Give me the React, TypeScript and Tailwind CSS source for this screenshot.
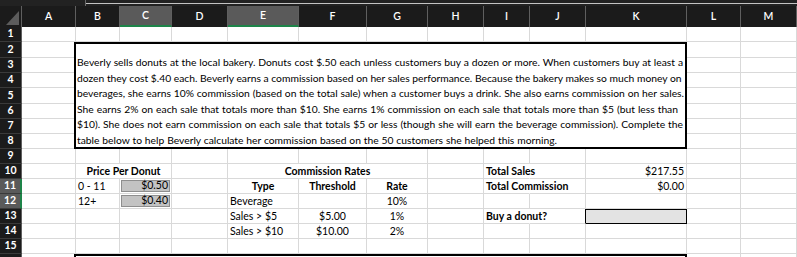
import React from "react";
import clsx from "clsx";

type CellProps = { w: string; className?: string; children?: React.ReactNode; h?: string };

function Cell({ w, className = "", children, h = "h-full" }: CellProps) {
  return (
    <div
      className={clsx(
        "shrink-0 border-r border-b border-[#d9d9d9] flex items-end px-[2px] text-[10.5px] leading-[14px] whitespace-nowrap text-black",
        w,
        h,
        className
      )}
    >
      {children}
    </div>
  );
}

const COLS = [
  { k: "A", w: "w-[54px]" },
  { k: "B", w: "w-[44px]" },
  { k: "C", w: "w-[52px]", sel: true },
  { k: "D", w: "w-[56px]" },
  { k: "E", w: "w-[71px]", sel: true },
  { k: "F", w: "w-[68px]" },
  { k: "G", w: "w-[61px]" },
  { k: "H", w: "w-[56px]" },
  { k: "I", w: "w-[46px]" },
  { k: "J", w: "w-[56px]" },
  { k: "K", w: "w-[101px]" },
  { k: "L", w: "w-[54px]" },
  { k: "M", w: "w-[56px]" },
];

const ROWH = [
  "h-[15px]",
  "h-[16px]",
  "h-[15px]",
  "h-[15px]",
  "h-[16px]",
  "h-[15px]",
  "h-[15px]",
  "h-[15px]",
  "h-[15px]",
  "h-[15px]",
  "h-[15px]",
  "h-[15px]",
  "h-[15px]",
  "h-[15px]",
  "h-[15px]",
  "h-[15px]",
];

const W = {
  A: "w-[54px]",
  B: "w-[44px]",
  C: "w-[52px]",
  D: "w-[56px]",
  E: "w-[71px]",
  F: "w-[68px]",
  G: "w-[61px]",
  H: "w-[56px]",
  I: "w-[46px]",
  J: "w-[56px]",
  K: "w-[101px]",
  L: "w-[54px]",
  M: "w-[56px]",
};

function EmptyRow({ h }: { h: string }) {
  return (
    <div className={clsx("flex", h)}>
      {COLS.map((c) => (
        <Cell key={c.k} w={c.w} />
      ))}
    </div>
  );
}

function GreyPrice({ v }: { v: string }) {
  return (
    <Cell w={W.C} className="!p-[1px]">
      <div className="w-full h-full bg-[#c3c3c3] border border-[#8e8e8e] flex items-end justify-end pr-[1px] leading-[12px]">
        {v}
      </div>
    </Cell>
  );
}

const TEXT_LINES: { t: string; w: string; j: boolean }[] = [
  {
    t: "Beverly sells donuts at the local bakery. Donuts cost $.50 each unless customers buy a dozen or more. When customers buy at least a",
    w: "w-[606px]",
    j: true,
  },
  {
    t: "dozen they cost $.40 each. Beverly earns a commission based on her sales performance. Because the bakery makes so much money on",
    w: "w-[604px]",
    j: true,
  },
  {
    t: "beverages, she earns 10% commission (based on the total sale) when a customer buys a drink. She also earns commission on her sales.",
    w: "w-[607px]",
    j: true,
  },
  {
    t: "She earns 2% on each sale that totals more than $10. She earns 1% commission on each sale that totals more than $5 (but less than",
    w: "w-[601px]",
    j: true,
  },
  {
    t: "$10). She does not earn commission on each sale that totals $5 or less (though she will earn the beverage commission). Complete the",
    w: "w-[606px]",
    j: true,
  },
  {
    t: "table below to help Beverly calculate her commission based on the 50 customers she helped this morning.",
    w: "w-[480px]",
    j: true,
  },
];

export default function App() {
  const mid = ROWH.slice(1, 8);
  return (
    <div className="w-[797px] h-[257px] overflow-hidden bg-white [font-family:Lato,sans-serif]">
      {/* top strip */}
      <div className="h-[6px] bg-[#222222] flex">
        <div className="w-[85px] shrink-0" />
        <div className="w-px bg-[#6a6a6a]" />
        <div className="flex-1 pt-[3px]">
          <div className="h-px bg-[#c4c4c4]" />
        </div>
      </div>

      {/* column header */}
      <div className="flex h-[21px] bg-[#1b1b1b]">
        <div className="w-[22px] shrink-0 border-r border-[#5f5f5f]">
          <svg width="21" height="21" viewBox="0 0 21 21" className="block">
            <polygon points="6,19 19,19 19,5" fill="#5c5c5c" />
          </svg>
        </div>
        {COLS.map((c) => (
          <div
            key={c.k}
            className={clsx(
              "shrink-0 h-full flex items-center justify-center text-white text-[10.5px] font-semibold border-r border-[#5f5f5f]",
              c.w,
              c.sel && "bg-[#5a5a5a] border-b-2 border-b-[#1e8449]"
            )}
          >
            {c.k}
          </div>
        ))}
      </div>

      <div className="flex">
        {/* row numbers */}
        <div className="flex flex-col w-[22px] shrink-0">
          {ROWH.map((h, i) => {
            const sel = i === 10 || i === 11;
            return (
              <div
                key={i}
                className={clsx(
                  "flex items-center justify-center text-white text-[10.5px] font-bold border-b border-[#3a3a3a] border-r border-r-[#5f5f5f]",
                  h,
                  sel ? "bg-[#5a5a5a] !border-r-2 !border-r-[#1e8449]" : "bg-[#1b1b1b]"
                )}
              >
                {i < 15 ? i + 1 : ""}
              </div>
            );
          })}
        </div>

        {/* sheet */}
        <div className="flex flex-col">
          <EmptyRow h={ROWH[0]} />

          {/* rows 2-8 with merged text box */}
          <div className="flex h-[107px]">
            <div className="flex flex-col">
              {mid.map((h, i) => (
                <Cell key={i} w={W.A} h={h} />
              ))}
            </div>
            <div className="w-[613px] -ml-[2px] shrink-0 h-full border-2 border-black bg-white pt-[11px] pl-[1px] text-[10.3px] leading-[15.6px] text-black relative z-10">
              {TEXT_LINES.map((l, i) => (
                <div
                  key={i}
                  className={clsx("whitespace-nowrap", l.w, l.j && "[text-align-last:justify] [text-align:justify]")}
                >
                  {l.t}
                </div>
              ))}
            </div>
            <div className="flex flex-col">
              {mid.map((h, i) => (
                <Cell key={i} w={W.L} h={h} />
              ))}
            </div>
            <div className="flex flex-col">
              {mid.map((h, i) => (
                <Cell key={i} w={W.M} h={h} />
              ))}
            </div>
          </div>

          <EmptyRow h={ROWH[8]} />

          {/* row 10 */}
          <div className={clsx("flex", ROWH[9])}>
            <Cell w={W.A} />
            <Cell w="w-[96px]" className="justify-center font-bold">
              Price Per Donut
            </Cell>
            <Cell w={W.D} />
            <Cell w="w-[200px]" className="justify-center font-bold">
              Commission Rates
            </Cell>
            <Cell w={W.H} />
            <Cell w={W.I} className="font-bold !border-r-transparent">
              Total Sales
            </Cell>
            <Cell w={W.J} />
            <Cell w={W.K} className="justify-end">
              $217.55
            </Cell>
            <Cell w={W.L} />
            <Cell w={W.M} />
          </div>

          {/* row 11 */}
          <div className={clsx("flex", ROWH[10])}>
            <Cell w={W.A} />
            <Cell w={W.B}>0 - 11</Cell>
            <GreyPrice v="$0.50" />
            <Cell w={W.D} />
            <Cell w={W.E} className="justify-center font-bold">
              Type
            </Cell>
            <Cell w={W.F} className="justify-center font-bold">
              Threshold
            </Cell>
            <Cell w={W.G} className="justify-center font-bold">
              Rate
            </Cell>
            <Cell w={W.H} />
            <Cell w={W.I} className="font-bold !border-r-transparent">
              Total Commission
            </Cell>
            <Cell w={W.J} />
            <Cell w={W.K} className="justify-end">
              $0.00
            </Cell>
            <Cell w={W.L} />
            <Cell w={W.M} />
          </div>

          {/* row 12 */}
          <div className={clsx("flex", ROWH[11])}>
            <Cell w={W.A} />
            <Cell w={W.B}>12+</Cell>
            <GreyPrice v="$0.40" />
            <Cell w={W.D} />
            <Cell w={W.E}>Beverage</Cell>
            <Cell w={W.F} />
            <Cell w={W.G} className="justify-center">
              10%
            </Cell>
            <Cell w={W.H} />
            <Cell w={W.I} />
            <Cell w={W.J} />
            <Cell w={W.K} />
            <Cell w={W.L} />
            <Cell w={W.M} />
          </div>

          {/* row 13 */}
          <div className={clsx("flex", ROWH[12])}>
            <Cell w={W.A} />
            <Cell w={W.B} />
            <Cell w={W.C} />
            <Cell w={W.D} />
            <Cell w={W.E}>Sales &gt; $5</Cell>
            <Cell w={W.F} className="justify-center">
              $5.00
            </Cell>
            <Cell w={W.G} className="justify-center">
              1%
            </Cell>
            <Cell w={W.H} />
            <Cell w={W.I} className="font-bold !border-r-transparent">
              Buy a donut?
            </Cell>
            <Cell w={W.J} className="!border-r-black" />
            <Cell w={W.K} className="bg-[#e3e3e3] !border-b-black !border-r-black border-t border-t-black" />
            <Cell w={W.L} />
            <Cell w={W.M} />
          </div>

          {/* row 14 */}
          <div className={clsx("flex", ROWH[13])}>
            <Cell w={W.A} />
            <Cell w={W.B} />
            <Cell w={W.C} />
            <Cell w={W.D} />
            <Cell w={W.E}>Sales &gt; $10</Cell>
            <Cell w={W.F} className="justify-center">
              $10.00
            </Cell>
            <Cell w={W.G} className="justify-center">
              2%
            </Cell>
            <Cell w={W.H} />
            <Cell w={W.I} />
            <Cell w={W.J} />
            <Cell w={W.K} />
            <Cell w={W.L} />
            <Cell w={W.M} />
          </div>

          <EmptyRow h={ROWH[14]} />

          {/* row 16 – top of next box */}
          <div className={clsx("flex", ROWH[15])}>
            <Cell w={W.A} />
            <div className="w-[613px] -ml-[2px] shrink-0 h-full border-t-2 border-l-2 border-r-2 border-black bg-white relative z-10" />
            <Cell w={W.L} />
            <Cell w={W.M} />
          </div>
        </div>
      </div>
    </div>
  );
}
